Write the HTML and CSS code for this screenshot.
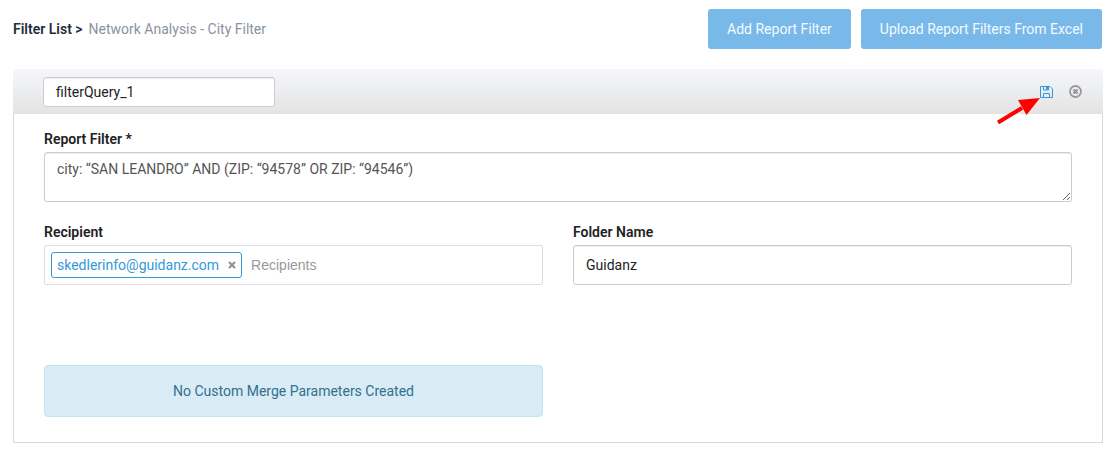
FILE: index.html
```html
<!DOCTYPE html>
<html lang="en">
<head>
<meta charset="utf-8">
<title>Filter List</title>
<link rel="stylesheet" href="styles.css">
</head>
<body>
<header class="topbar">
  <nav class="crumbs"><a class="crumb-link" href="#">Filter List &gt;</a><span class="crumb-current">Network Analysis - City Filter</span></nav>
  <div class="actions">
    <button class="btn" type="button">Add Report Filter</button>
    <button class="btn" type="button">Upload Report Filters From Excel</button>
  </div>
</header>
<main class="panel">
  <div class="panel-head">
    <input class="control name-input" type="text" value="filterQuery_1" aria-label="Filter name">
    <div class="tools">
      <button class="tool save" type="button" aria-label="Save">
        <svg width="13" height="12" viewBox="0 0 13 12" fill="none" stroke="currentColor"><path d="M.5.5h9.500l2.500 2.500v8.500h-12z"/><path d="M3.500 11.500v-4h6v4M3.500.5v3.500h5v-3.500"/><path d="M6 1h2v2.500h-2z" fill="currentColor" stroke="none"/></svg>
        <svg class="pointer" width="44" height="28" viewBox="0 0 44 28" aria-hidden="true"><path d="M1 25.500 25 11" stroke="#f00" stroke-width="4"/><path d="M43 1 21 3 29.500 18z" fill="#f00"/></svg>
      </button>
      <button class="tool close" type="button" aria-label="Remove">
        <svg width="13" height="13" viewBox="0 0 13 13" fill="none" stroke="currentColor"><circle cx="6.500" cy="6.500" r="5.500" stroke-width="1.800"/><path d="m4.500 4.500 4 4m0-4-4 4" stroke-width="2.200"/></svg>
      </button>
    </div>
  </div>
  <form class="panel-body">
    <div class="field wide">
      <label for="query">Report Filter *</label>
      <textarea class="control query" id="query">city: “SAN LEANDRO” AND (ZIP: “94578” OR ZIP: “94546”)</textarea>
    </div>
    <div class="field">
      <label for="recipient">Recipient</label>
      <div class="tags">
        <span class="tag">skedlerinfo@guidanz.com<button class="tag-remove" type="button" aria-label="Remove recipient"><svg width="8" height="8" viewBox="0 0 8 8" stroke="currentColor" stroke-width="2"><path d="m1 1 6 6m0-6-6 6"/></svg></button></span>
        <input class="tag-input" id="recipient" type="text" placeholder="Recipients">
      </div>
    </div>
    <div class="field">
      <label for="folder">Folder Name</label>
      <input class="control folder" id="folder" type="text" value="Guidanz">
    </div>
    <div class="notice" role="status">No Custom Merge Parameters Created</div>
  </form>
</main>
</body>
</html>
```
FILE: styles.css
```css
* { box-sizing: border-box; }
body {
  margin: 0;
  padding: 9px 12px 12px 13px;
  background: #fff;
  color: #222;
  font: 14px/20px Roboto, sans-serif;
}
input, textarea, button { font: inherit; }
button { cursor: pointer; }

.topbar { display: flex; justify-content: space-between; align-items: center; margin-bottom: 20px; }
.crumbs { display: flex; gap: 6px; }
.crumb-link { color: #1f2d41; font-weight: 600; text-decoration: none; }
.crumb-current { color: #8a939d; }
.actions { display: flex; gap: 10px; padding-right: 1px; }
.btn {
  height: 40px;
  padding: 0 19px;
  border: 0;
  border-radius: 3px;
  background: #78b9e9;
  color: #f4faff;
}

.panel { border: 1px solid #d9d9d9; border-top: 0; }
.panel-head {
  display: flex;
  justify-content: space-between;
  align-items: center;
  height: 45px;
  margin: 0 -1px;
  padding: 0 21px 0 30px;
  background: linear-gradient(#f5f7fc, #e3e3e3);
}
.control {
  border: 1px solid #ccc;
  border-radius: 3px;
  background: #fff;
  box-shadow: inset 0 1px 1px rgba(0, 0, 0, .075);
  color: #222;
  padding: 0 12px;
  outline: 0;
}
.name-input { width: 232px; height: 30px; }
.tools { display: flex; align-items: center; gap: 16px; }
.tool { display: flex; position: relative; padding: 0; border: 0; background: none; }
.save { color: #3498db; }
.close { color: #999; }
.pointer { position: absolute; right: 12px; top: 11px; }

.panel-body {
  display: grid;
  grid-template-columns: 1fr 1fr;
  column-gap: 30px;
  padding: 15px 30px 25px;
}
.field { display: flex; flex-direction: column; gap: 3px; }
.field label { font-weight: 600; }
.wide { grid-column: 1 / -1; margin-bottom: 20px; }
.query { height: 50px; padding: 6px 12px; color: #555; resize: vertical; }
.folder { height: 40px; }
.tags {
  display: flex;
  align-items: center;
  gap: 9px;
  height: 40px;
  padding: 0 6px;
  border: 1px solid #dcdce6;
  border-radius: 2px;
}
.tag {
  display: flex;
  align-items: center;
  gap: 9px;
  height: 26px;
  padding: 0 5px;
  border: 1px solid #3498db;
  border-radius: 3px;
  color: #3498db;
}
.tag-remove { display: flex; padding: 0; border: 0; background: none; color: #8f8f8f; }
.tag-input { flex: 1; min-width: 0; padding: 0; border: 0; outline: 0; font-family: "Liberation Sans", sans-serif; }
.tag-input::placeholder { color: #999; }
.notice {
  margin-top: 80px;
  padding: 15px;
  border: 1px solid #bce8f1;
  border-radius: 4px;
  background: #d9ebf5;
  color: #31708f;
  text-align: center;
}
```
